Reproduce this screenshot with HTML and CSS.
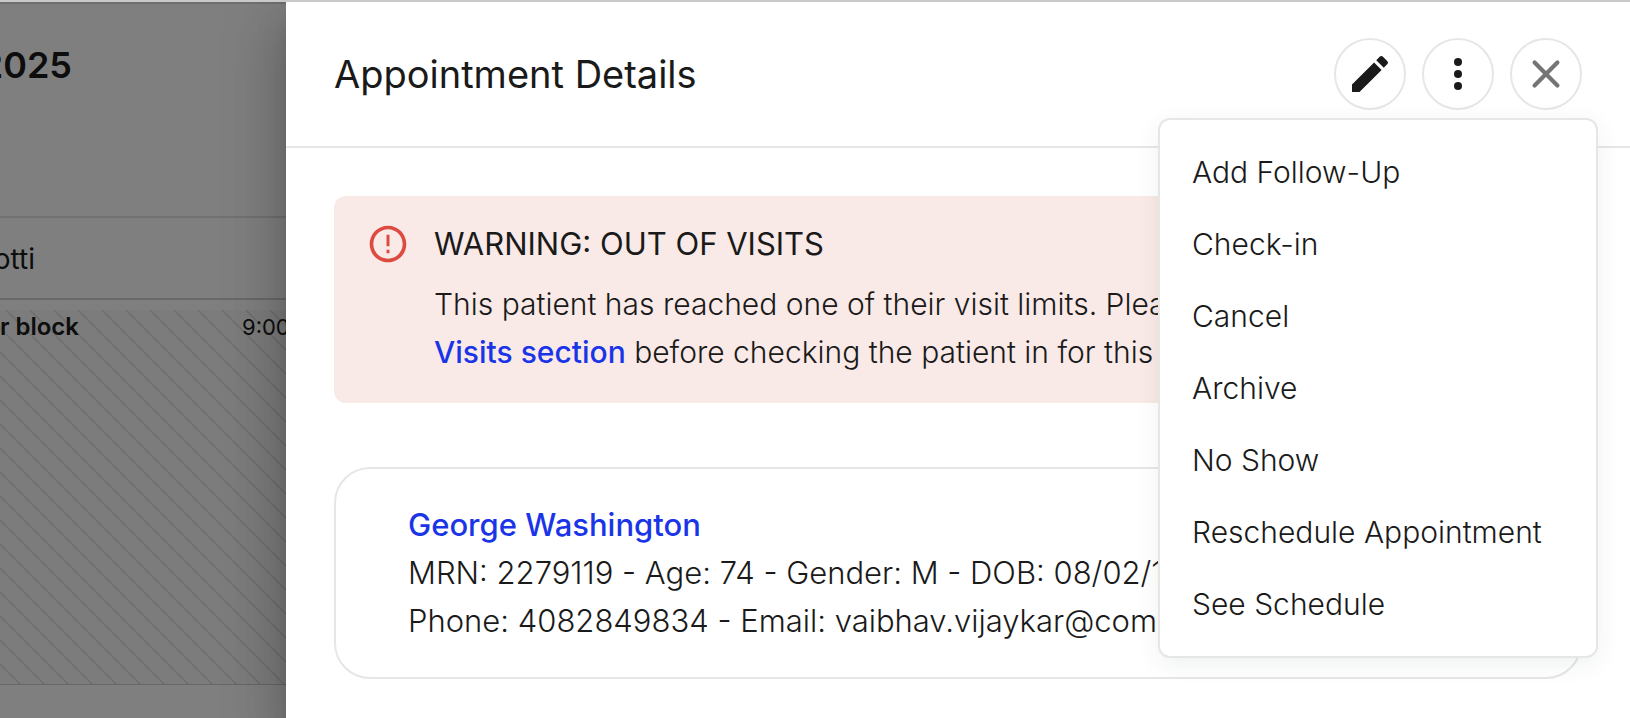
FILE: index.html
```html
<!DOCTYPE html>
<html lang="en">
<head>
  <meta charset="UTF-8" />
  <meta name="viewport" content="width=device-width, initial-scale=1.0" />
  <title>Appointment Details</title>
  <link rel="stylesheet" href="styles.css">
</head>
<body>
  <!-- calendar behind the drawer -->
  <div class="schedule">
    <div class="schedule-header"><div class="schedule-date">2025</div></div>
    <div class="schedule-provider"><div class="provider-name">otti</div></div>
    <div class="schedule-body">
      <div class="block">
        <div class="block-name">r block</div>
        <div class="block-time">9:00</div>
      </div>
    </div>
    <div class="scrim"></div>
  </div>

  <div class="drawer">
    <div class="drawer-header">
      <h1>Appointment Details</h1>
      <div class="actions">
        <button class="icon-btn" aria-label="Edit">
          <svg width="48" height="48" viewBox="0 0 24 24" fill="currentColor"><path d="M3 17.25V21h3.75L17.81 9.94l-3.75-3.75L3 17.25zM20.71 7.04a1 1 0 0 0 0-1.41l-2.34-2.34a1 1 0 0 0-1.41 0l-1.83 1.83 3.75 3.75 1.83-1.83z"/></svg>
        </button>
        <button class="icon-btn" aria-label="More" aria-haspopup="menu" aria-expanded="true">
          <svg width="48" height="48" viewBox="0 0 24 24" fill="currentColor"><circle cx="12" cy="6" r="2"/><circle cx="12" cy="12" r="2"/><circle cx="12" cy="18" r="2"/></svg>
        </button>
        <button class="icon-btn close" aria-label="Close">
          <svg width="48" height="48" viewBox="0 0 24 24" fill="none" stroke="currentColor" stroke-width="2.1" stroke-linecap="round"><path d="M6.3 6.3 17.7 17.7M17.7 6.3 6.3 17.7"/></svg>
        </button>
      </div>
      <div class="menu" role="menu">
        <button role="menuitem">Add Follow-Up</button>
        <button role="menuitem">Check-in</button>
        <button role="menuitem">Cancel</button>
        <button role="menuitem">Archive</button>
        <button role="menuitem">No Show</button>
        <button role="menuitem">Reschedule Appointment</button>
        <button role="menuitem">See Schedule</button>
      </div>
    </div>

    <div class="drawer-body">
      <div class="warning">
        <svg class="warning-icon" width="44" height="44" viewBox="0 0 24 24" fill="currentColor"><path d="M11.2 15.2h1.6v1.8h-1.6zm0-8.2h1.6v6.2h-1.6zm.79-5C6.47 2 2 6.48 2 12s4.47 10 9.99 10C17.52 22 22 17.52 22 12S17.52 2 11.99 2zM12 20c-4.42 0-8-3.58-8-8s3.58-8 8-8 8 3.58 8 8-3.58 8-8 8z"/></svg>
        <div>
          <h2>WARNING: OUT OF VISITS</h2>
          <p>This patient has reached one of their visit limits. Please<br>
            <a href="#">Visits section</a> before checking the patient in for this</p>
        </div>
      </div>

      <div class="patient">
        <a href="#">George Washington</a>
        <p>MRN: 2279119 - Age: 74 - Gender: M - DOB: 08/02/1951</p>
        <p>Phone: 4082849834 - Email: vaibhav.vijaykar@comm</p>
      </div>
    </div>
  </div>
</body>
</html>
```
FILE: styles.css
```css
* {
  box-sizing: border-box;
}
body {
  margin: 0;
  min-height: 100vh;
  display: flex;
  border-top: 2px solid #c9c9c9;
  font-family: Inter, "Liberation Sans", sans-serif;
  font-size: 30px;
  font-weight: 300;
  line-height: 48px;
  color: #1a1a1a;
  background: #fff;
  overflow: hidden;
}
h1, h2, p {
  margin: 0;
}
a {
  color: #1a35e8;
  font-weight: 500;
  text-decoration: none;
}
button {
  font: inherit;
  color: inherit;
  background: #fff;
  border: none;
  cursor: pointer;
}

/* schedule */
.schedule {
  position: relative;
  width: 286px;
  flex-shrink: 0;
  display: flex;
  flex-direction: column;
  overflow: hidden;
}
.scrim {
  position: absolute;
  inset: 0;
  background: rgba(0, 0, 0, 0.5);
}
.schedule-header {
  height: 216px;
  padding-top: 37px;
  border-top: 2px solid #dedede;
  border-bottom: 2px solid #e3e3e3;
}
.schedule-date,
.provider-name,
.block-name {
  display: flex;
  justify-content: flex-end;
  white-space: nowrap;
}
.schedule-date {
  width: 72px;
  font-size: 36px;
  font-weight: 600;
}
.schedule-provider {
  height: 82px;
  padding-top: 17px;
  border-bottom: 2px solid #d3d3d3;
}
.provider-name {
  width: 35px;
  font-size: 28px;
  font-weight: 400;
}
.schedule-body {
  padding-top: 10px;
}
.block {
  height: 375px;
  display: flex;
  justify-content: space-between;
  line-height: 34px;
  white-space: nowrap;
  border-bottom: 1px solid #cfcfcf;
  background: linear-gradient(45deg, transparent 47%, #e2e2e2 47%, #e2e2e2 53%, transparent 53%) 6px 0 / 24px 24px #f8f8f8;
}
.block-name {
  width: 79px;
  font-size: 24px;
  font-weight: 600;
}
.block-time {
  width: 44px;
  font-size: 22px;
  font-weight: 400;
}

/* drawer */
.drawer {
  position: relative;
  flex: 1;
  min-width: 0;
  background: #fff;
  box-shadow: 0 16px 20px -10px rgba(0, 0, 0, 0.2),
    0 32px 48px 4px rgba(0, 0, 0, 0.14),
    0 12px 60px 10px rgba(0, 0, 0, 0.12);
}
.drawer-header {
  display: flex;
  align-items: center;
  justify-content: space-between;
  padding: 36px 48px;
  border-bottom: 2px solid #e6e6e6;
}
h1 {
  font-size: 38px;
  font-weight: 400;
  line-height: 72px;
}
.actions {
  display: flex;
  gap: 16px;
}
.icon-btn {
  width: 72px;
  height: 72px;
  padding: 0;
  display: flex;
  align-items: center;
  justify-content: center;
  border: 2px solid #e6e6e6;
  border-radius: 50%;
}
.close {
  color: #757575;
}
.menu {
  position: absolute;
  top: 116px;
  right: 32px;
  width: 440px;
  padding: 16px 0;
  background: #fff;
  border: 2px solid #e6e6e6;
  border-radius: 12px;
  box-shadow: 0 6px 24px rgba(20, 50, 40, 0.07);
}
.menu button {
  display: block;
  width: 100%;
  padding: 12px 32px;
  text-align: left;
  white-space: nowrap;
}
.drawer-body {
  padding: 48px;
  display: flex;
  flex-direction: column;
  gap: 64px;
}
.warning {
  display: flex;
  gap: 24px;
  padding: 24px 32px 27px;
  background: #f9e9e7;
  border-radius: 12px;
  white-space: nowrap;
}
.warning-icon {
  flex-shrink: 0;
  margin-top: 2px;
  color: #dd4a3f;
}
h2 {
  margin-bottom: 12px;
  font-size: 31px;
  font-weight: 400;
}
.patient {
  padding: 32px 72px;
  border: 2px solid #e6e6e6;
  border-radius: 36px;
  font-size: 31px;
  white-space: nowrap;
}
```
